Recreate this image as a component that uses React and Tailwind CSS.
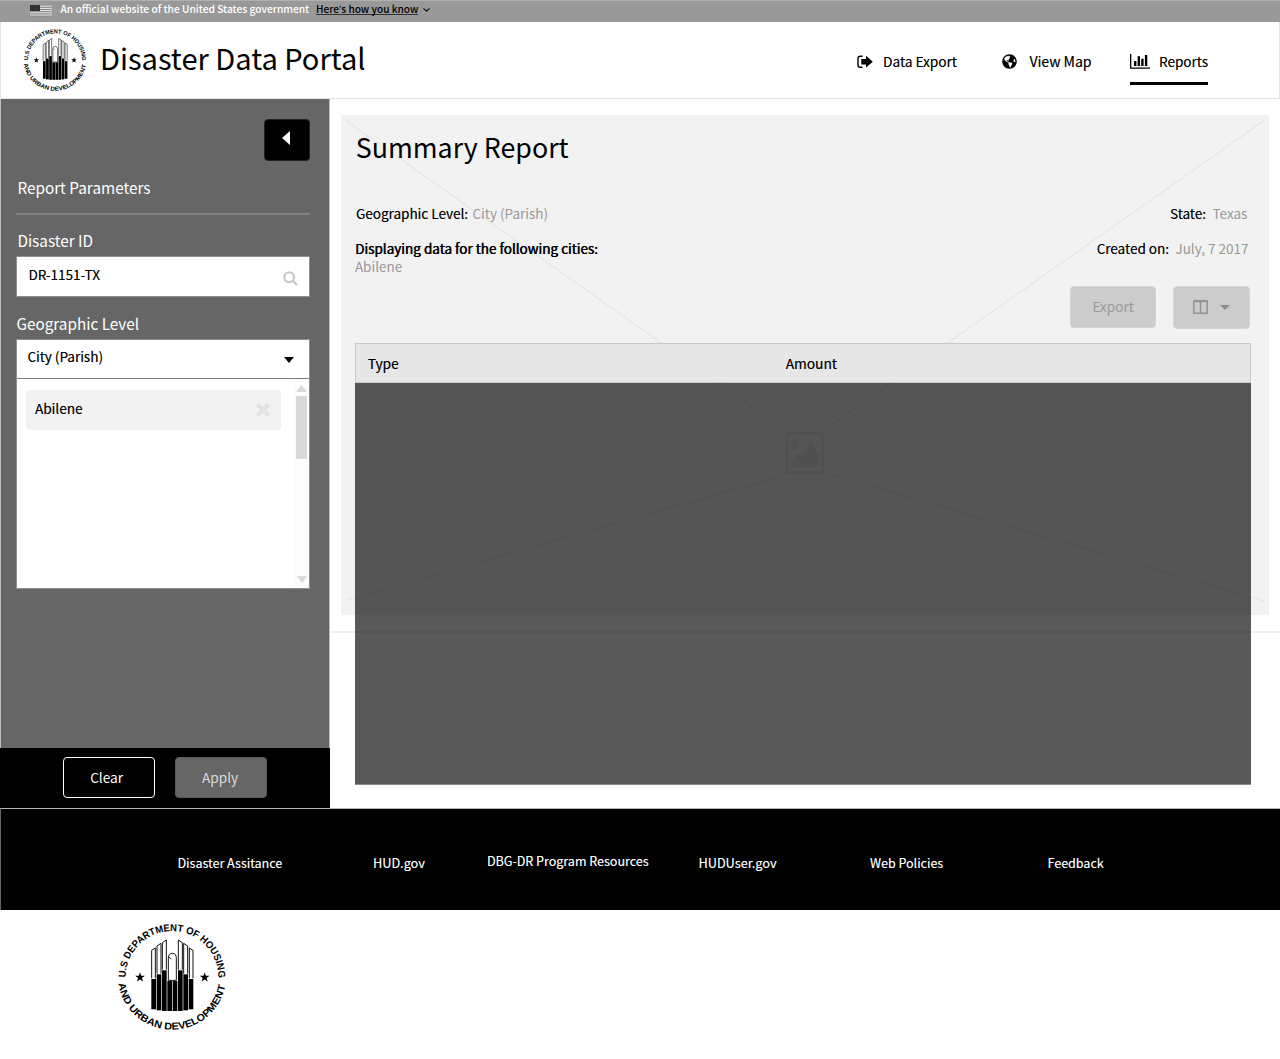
import React from 'react';
import { FaGlobeAmericas } from 'react-icons/fa';

const STAR = 'M0,-15 L3.6,-4.8 L14.5,-4.6 L5.9,2 L9,12.3 L0,6.2 L-9,12.3 L-5.9,2 L-14.5,-4.6 L-3.6,-4.8 Z';

function Seal({ id, className }) {
  const bars = [
    [154, 207, 298], [170, 193, 301], [186, 181, 303], [202, 213, 303],
    [218, 213, 303], [234, 181, 303], [250, 193, 301], [266, 207, 298],
  ];
  return (
    <svg viewBox="0 0 110 110" className={className} aria-label="U.S. Department of Housing and Urban Development">
      <defs>
        <path id={id + '-top'} d="M8.6,55.5 A46.4,46.4 0 0 1 101.4,55.5" />
        <path id={id + '-bottom'} d="M1.1,60 A54.3,54.3 0 0 0 108.9,60" />
      </defs>
      <g fontFamily="Liberation Sans, Arial, sans-serif" fontWeight="700" fontSize="10">
        <text><textPath href={'#' + id + '-top'} textLength="146" lengthAdjust="spacingAndGlyphs">U.S DEPARTMENT OF HOUSING</textPath></text>
        <text><textPath href={'#' + id + '-bottom'} startOffset="1.5" textLength="152" lengthAdjust="spacingAndGlyphs">AND URBAN DEVELOPMENT</textPath></text>
      </g>
      <g transform="scale(0.33333) translate(-51,-36)">
        {bars.map(([x, y, b]) => <rect key={x} x={x} y={y} width="14" height={b - y} />)}
        <g fill="none" stroke="#000" strokeWidth="2.8">
          <path d="M155,205V121L166,114V205M171,191V108L183,100V191M187,179V98L199,90V179" />
          <path d="M279,205V121L268,114V205M263,191V108L251,100V191M247,179V98L235,90V179" />
          <path d="M205,211V145Q205,130 217,130Q229,130 229,145V211Z" />
          <path d="M207,142L214,147" />
        </g>
        <path d={STAR} transform="translate(120,202)" />
        <path d={STAR} transform="translate(314,202)" />
      </g>
    </svg>
  );
}

function Flag() {
  return (
    <svg viewBox="0 0 22 12" className="ml-[30px] mt-[3.5px] h-[12px] w-[22px]">
      <rect width="22" height="11.5" fill="#8a8a8a" />
      <path d="M0,1.2H22M0,3.4H22M0,5.6H22M0,7.8H22M0,10H22" stroke="#e8e8e8" strokeWidth="1" />
      <rect width="10" height="6" fill="#2c2c2c" />
      <path d="M1,1.5H9M1,3.2H9M1,4.8H9" stroke="#555" strokeWidth=".6" strokeDasharray="1 1" />
    </svg>
  );
}

const ExportIcon = () => (
  <svg viewBox="0 0 16 14" className="h-[14px] w-[16px]">
    <path d="M5.5,1.2H3.2A2.2,2.2 0 0 0 1,3.4V10A2.2,2.2 0 0 0 3.2,12.2H5.5" fill="none" stroke="#000" strokeWidth="1.4" />
    <path d="M4.3,3.9H9V.8L15.8,6.7L9,12.6V9.6H4.3Z" />
  </svg>
);

const ChartIcon = () => (
  <svg viewBox="0 0 20 15" className="h-[15px] w-[20px]">
    <path d="M0,0H1.3V13.4H20V14.8H0ZM4,7H6.4V12H4ZM7.6,2.2H10V12H7.6ZM11.2,4.8H13.6V12H11.2ZM14.9,1H17.3V12H14.9Z" />
  </svg>
);

function TopBar() {
  return (
    <div className="flex h-[22px] items-start border-t border-[#b0b0b0] bg-[#999] text-[10.22px] font-medium leading-[16px]">
      <Flag />
      <span className="ml-[8.4px] text-white">An official website of the United States government</span>
      <span className="ml-[7px] h-[13.5px] border-b border-[#333] text-[10.12px] text-black">
        Here<span className="font-['Lato']">’</span>s how you know
      </span>
      <svg viewBox="0 0 7 4" className="ml-[5px] mt-[7px] h-[4px] w-[7px]">
        <path d="M.5,.4L3.5,3.2L6.5,.4" fill="none" stroke="#111" strokeWidth="1.1" />
      </svg>
    </div>
  );
}

function Header() {
  return (
    <header className="flex h-[77px] items-start border border-t-0 border-[#e5e5e5] bg-white">
      <Seal id="seal-small" className="ml-[22px] mt-[6px] h-[64px] w-[64px]" />
      <h1 className="ml-[13px] mt-[15px] text-[29.05px] leading-[40px]">Disaster Data Portal</h1>
      <nav className="ml-auto mr-[71px] flex text-[13.65px] leading-[20px] [text-shadow:0.25px_0_0_rgba(0,0,0,0.45)]">
        <a className="mr-[45px] flex pt-[29px]">
          <span className="mr-[10px] mt-[4px]"><ExportIcon /></span>Data Export
        </a>
        <a className="mr-[38.5px] flex pt-[29px] text-[14px]">
          <FaGlobeAmericas className="mr-[12.5px] mt-[2.5px] h-[15px] w-[15px]" />View Map
        </a>
        <a className="flex h-[63px] w-[78px] justify-between border-b-[3px] border-black pt-[29px] text-[13.5px]">
          <span className="mt-[3px]"><ChartIcon /></span>Reports
        </a>
      </nav>
    </header>
  );
}

function Sidebar() {
  return (
    <aside className="flex h-[709px] w-[330px] shrink-0 flex-col border-x border-[#bdbdbd] bg-[#666]">
      <div className="flex h-[649px] flex-col pl-[15.4px] pr-[19px] text-[15.3px] leading-[20px] text-white">
        <button className="mt-[20px] flex h-[42px] w-[46px] justify-center self-end rounded-[4px] border border-[#222] bg-black pt-[11px]">
          <svg viewBox="0 0 8 14" className="mr-[2px] h-[14px] w-[8px]"><path d="M8,0V14L0,7Z" fill="#fff" /></svg>
        </button>
        <h2 className="mt-[16px] pl-[1px]">Report Parameters</h2>
        <div className="mt-[16px] h-[2px] bg-[#818181]" />
        <label className="mt-[15px] pl-[1px]">Disaster ID</label>
        <div className="mt-[6px] flex h-[41px] justify-between border border-[#8f8f8f] bg-white pl-[11px] pr-[11px] text-[13.5px] text-black [text-shadow:0.25px_0_0_rgba(0,0,0,0.45)]">
          <span className="mt-[7px]">DR-1151-TX</span>
          <svg viewBox="0 0 15 15" className="mt-[13.5px] h-[15px] w-[15px]">
            <circle cx="6.2" cy="6.2" r="4.9" fill="none" stroke="#c8c8c8" strokeWidth="2.2" />
            <path d="M10,10L13.4,13.4" stroke="#c8c8c8" strokeWidth="2.4" strokeLinecap="round" />
          </svg>
        </div>
        <label className="mt-[16px]">Geographic Level</label>
        <div className="mt-[6px] h-[249.5px] border border-[#8f8f8f] bg-white text-[13.5px] text-black [text-shadow:0.25px_0_0_rgba(0,0,0,0.45)]">
          <div className="flex h-[39px] justify-between border-b border-[#7a7a7a] pl-[10px] pr-[15px]">
            <span className="mt-[6px]">City (Parish)</span>
            <svg viewBox="0 0 10 6" className="mt-[16.5px] h-[6px] w-[10px]"><path d="M0,0H10L5,6Z" /></svg>
          </div>
          <div className="flex h-[208.5px] justify-between">
            <div className="ml-[8.5px] mt-[11px] flex h-[40px] w-[255.5px] justify-between rounded-[4px] bg-[#f2f2f2] pl-[9px] pr-[11px] text-[13.6px]">
              <span className="mt-[8px]">Abilene</span>
              <svg viewBox="0 0 14 14" className="mt-[13px] h-[14px] w-[14px]">
                <path d="M3,3L11,11M11,3L3,11" stroke="#e3e3e3" strokeWidth="4.4" strokeLinecap="square" />
              </svg>
            </div>
            <div className="flex w-[15px] flex-col items-center bg-[#fcfcfc] pb-[5px] pt-[6px]">
              <svg viewBox="0 0 11 7" className="h-[7px] w-[11px]"><path d="M0,7L5.5,0L11,7Z" fill="#d9d9d9" /></svg>
              <div className="mt-[4px] h-[63px] w-[11px] bg-[#d9d9d9]" />
              <svg viewBox="0 0 11 7" className="mt-auto h-[7px] w-[10px]"><path d="M0,0H11L5.5,7Z" fill="#d9d9d9" /></svg>
            </div>
          </div>
        </div>
      </div>
      <div className="-mx-px flex h-[60px] gap-[20px] bg-black pl-[63px] pt-[9px] text-[13.6px] leading-[20px]">
        <button className="flex h-[41px] w-[92.4px] rounded-[4px] border border-white pl-[26.2px] pt-[9px] text-white">Clear</button>
        <button className="flex h-[41px] w-[91.5px] rounded-[4px] border border-[#5a5a5a] bg-[#666] pl-[25.7px] pt-[9px] text-[#dcdcdc]">Apply</button>
      </div>
    </aside>
  );
}

function Placeholder() {
  return (
    <svg viewBox="0 0 928 500" className="absolute left-0 top-0 h-[500px] w-[928px]">
      <g stroke="#e6e6e6" strokeWidth="1.2" fill="none">
        <path d="M5,5.5L441,313M923,5.5L486,313M5,485.5L441,361M923,486L486,358" />
        <rect x="446" y="318.5" width="36" height="39" rx="1.5" strokeWidth="2.8" />
      </g>
      <ellipse cx="453.5" cy="329.5" rx="3.8" ry="5" fill="#e5e5e5" />
      <path d="M450,352V347L457,338L460,342L470,328L478,340V352Z" fill="#e5e5e5" />
    </svg>
  );
}

function Report() {
  return (
    <main className="relative h-[709px] grow bg-white pl-[11px] pt-[15.5px]">
      <div className="absolute left-0 top-[532px] h-[2px] w-full bg-[#f0f0f0]" />
      <section className="relative h-[500px] w-[928px] bg-[#f2f2f2]">
        <Placeholder />
        <div className="relative flex flex-col pl-[13.5px] pr-[18px] text-[13.5px] leading-[18px]">
          <h2 className="mt-[12px] pl-[1.2px] text-[26.8px] leading-[40px]">Summary Report</h2>
          <div className="mt-[37.5px] flex justify-between pl-[1.5px] pr-[3.6px] [text-shadow:0.25px_0_0_rgba(0,0,0,0.45)]">
            <p>Geographic Level:<span className="ml-[4.5px] text-[#999] [text-shadow:none]">City (Parish)</span></p>
            <p>State:<span className="ml-[6.5px] text-[#999] [text-shadow:none]">Texas</span></p>
          </div>
          <div className="mt-[17px] flex h-[54px] justify-between pl-[0.4px] pr-[2.5px]">
            <p className="[text-shadow:0.5px_0_0_#000]">
              Displaying data for the following cities:
              <span className="block text-[#999] [text-shadow:none]">Abilene</span>
            </p>
            <p className="[text-shadow:0.25px_0_0_rgba(0,0,0,0.45)]">Created on:<span className="ml-[6.5px] text-[#999] [text-shadow:none]">July, 7 2017</span></p>
          </div>
          <div className="-mt-[7px] flex h-[57px] justify-end gap-[17px] pr-[1.5px] pt-px">
            <button className="-mt-px flex h-[42px] w-[85.5px] rounded-[4px] border border-[#d6d6d6] bg-[#ccc] pl-[21.5px] pt-[10.4px] text-[13.6px] text-[#999]">Export</button>
            <button className="-mt-px flex h-[43px] w-[77px] rounded-[4px] border border-[#d6d6d6] bg-[#ccc] pl-[19px]">
              <svg viewBox="0 0 15 14" className="mt-[13px] h-[14px] w-[15px]">
                <path d="M.8,.8H14.2V13.2H.8ZM7.5,1V13M.8,1.4H14.2" fill="none" stroke="#949494" strokeWidth="1.5" strokeLinejoin="round" />
              </svg>
              <svg viewBox="0 0 10 5" className="ml-[12px] mt-[18px] h-[5px] w-[10px]"><path d="M0,0H10L5,5Z" fill="#8c8c8c" /></svg>
            </button>
          </div>
          <div className="w-[896.5px]">
            <div className="grid h-[40px] grid-cols-[418px_1fr] border border-[#c8c8c8] bg-[#e6e6e6] pl-[12.2px] pt-[9px] text-[13.75px] leading-[20px] [text-shadow:0.25px_0_0_rgba(0,0,0,0.45)]">
              <span>Type</span>
              <span>Amount</span>
            </div>
            <div className="h-[402px] border-b border-[#888] bg-black/65" />
          </div>
        </div>
      </section>
    </main>
  );
}

function Footer() {
  return (
    <footer>
      <div className="flex h-[102px] border-l border-t border-l-[#666] border-t-[#b5b5b5] bg-black pl-[176.5px] pt-[44px] text-[12.5px] leading-[20px] text-white [text-shadow:0.2px_0_0_rgba(255,255,255,0.4)]">
        <a className="w-[195.5px] text-[12.5px]">Disaster Assitance</a>
        <a className="w-[114px] text-[12.7px]">HUD.gov</a>
        <a className="-mt-[2px] w-[211.5px] text-[12.5px]">DBG-DR Program Resources</a>
        <a className="w-[171.5px] text-[12.7px]">HUDUser.gov</a>
        <a className="w-[177.5px]">Web Policies</a>
        <a>Feedback</a>
      </div>
      <Seal id="seal-large" className="ml-[117px] mt-[11.5px] h-[110px] w-[110px]" />
    </footer>
  );
}

export default function App() {
  return (
    <div className="h-[1059px] w-[1280px] overflow-hidden whitespace-nowrap bg-white font-['Noto_Sans_CJK_SC','Noto_Sans',sans-serif] text-black">
      <TopBar />
      <Header />
      <div className="flex">
        <Sidebar />
        <Report />
      </div>
      <Footer />
    </div>
  );
}
